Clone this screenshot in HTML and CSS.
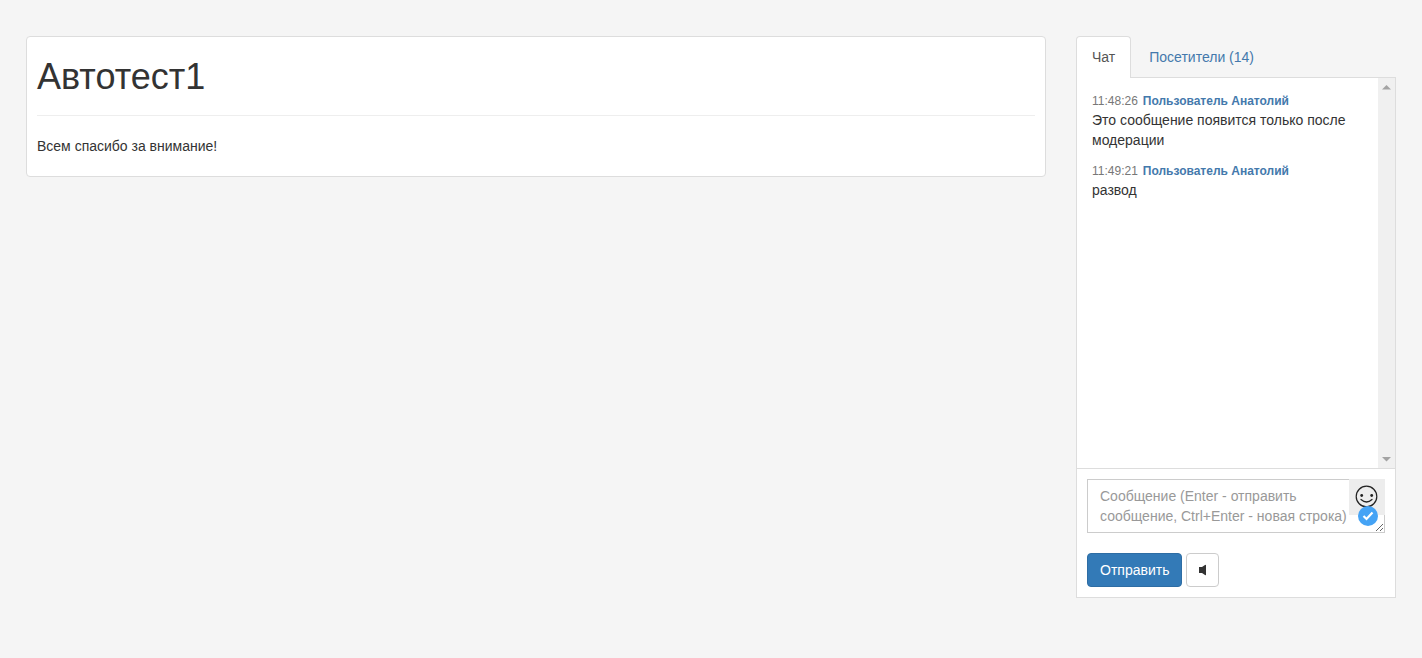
FILE: index.html
```html
<!DOCTYPE html>
<html lang="ru">
<head>
<meta charset="utf-8">
<meta name="viewport" content="width=device-width, initial-scale=1">
<title>Автотест1</title>
<link rel="stylesheet" href="styles.css">
</head>
<body>
<div class="page">
  <main class="card">
    <h1 class="card-title">Автотест1</h1>
    <p class="card-text">Всем спасибо за внимание!</p>
  </main>
  <aside class="chat">
    <nav class="tabs">
      <a class="tab tab-active" href="#chat">Чат</a>
      <a class="tab" href="#visitors">Посетители (14)</a>
    </nav>
    <section class="panel" id="chat">
      <div class="feed">
        <div class="messages">
          <article class="message">
            <header><time class="message-time">11:48:26</time><a class="message-author" href="#user">Пользователь Анатолий</a></header>
            <p class="message-text">Это сообщение появится только после модерации</p>
          </article>
          <article class="message">
            <header><time class="message-time">11:49:21</time><a class="message-author" href="#user">Пользователь Анатолий</a></header>
            <p class="message-text">развод</p>
          </article>
        </div>
        <div class="track" aria-hidden="true">
          <svg class="arrow" width="17" height="17" viewBox="0 0 17 17"><path d="M4 11.500L8.500 7L13 11.500Z" fill="#a3a3a3"/></svg>
          <svg class="arrow" width="17" height="17" viewBox="0 0 17 17"><path d="M4 6L8.500 10.500L13 6Z" fill="#a3a3a3"/></svg>
        </div>
      </div>
      <form class="composer">
        <div class="field">
          <textarea class="input" rows="2" aria-label="Сообщение" placeholder="Сообщение (Enter - отправить сообщение, Ctrl+Enter - новая строка)"></textarea>
          <button class="smile" type="button" aria-label="Смайлы">
            <svg width="36" height="36" viewBox="0 0 36 36" fill="none" stroke="#222" stroke-linecap="round"><circle cx="17.500" cy="17.500" r="10.300" stroke-width="1.200"/><path d="M12 20.500Q17.500 25.500 23 20.500" stroke-width="1.200"/><circle cx="12.700" cy="16.500" r="1.400" fill="#222" stroke="none"/><circle cx="22.700" cy="16.500" r="1.400" fill="#222" stroke="none"/></svg>
          </button>
          <svg class="check" width="20" height="20" viewBox="0 0 20 20"><circle cx="10" cy="10" r="10" fill="#45a3f5"/><path d="M5.500 10L8.500 13L14.500 6.500" fill="none" stroke="#fff" stroke-width="2.200"/></svg>
        </div>
        <div class="actions">
          <button class="btn btn-primary" type="submit">Отправить</button>
          <button class="btn btn-default" type="button" aria-label="Звук">
            <svg width="7" height="12" viewBox="0 0 7 12"><path d="M0 3H3L6 1Q7 .5 7 1.200V10.800Q7 11.500 6 11L3 9H0Z" fill="#333"/></svg>
          </button>
        </div>
      </form>
    </section>
  </aside>
</div>
</body>
</html>
```
FILE: styles.css
```css
* {
  box-sizing: border-box;
}

body {
  margin: 0;
  background: #f5f5f5;
  color: #333;
  font: 14px/20px "Liberation Sans", Arial, sans-serif;
}

a {
  color: #4479ac;
  text-decoration: none;
}

.page {
  display: grid;
  grid-template-columns: minmax(0, 1fr) 320px;
  gap: 30px;
  min-height: 100vh;
  padding: 36px 26px 60px;
}

.card {
  align-self: start;
  padding: 20px 10px;
  background: #fff;
  border: 1px solid #ddd;
  border-radius: 4px;
}

.card-title {
  margin: 0 0 20px;
  padding-bottom: 18px;
  border-bottom: 1px solid #eee;
  font-size: 36px;
  font-weight: 400;
  line-height: 40px;
}

.card-text,
.message-text {
  margin: 0;
}

.chat {
  display: flex;
  flex-direction: column;
}

.tabs {
  display: flex;
  gap: 2px;
}

.tab {
  padding: 10px 15px;
  border: 1px solid transparent;
  border-bottom: 0;
  border-radius: 4px 4px 0 0;
}

.tab-active {
  z-index: 1;
  margin-bottom: -1px;
  padding-bottom: 11px;
  background: #fff;
  border-color: #ddd;
  color: #555;
}

.panel {
  display: flex;
  flex: 1;
  flex-direction: column;
  background: #fff;
  border: 1px solid #ddd;
}

.feed {
  display: flex;
  flex: 1;
  border-bottom: 1px solid #ddd;
}

.messages {
  display: flex;
  flex: 1;
  flex-direction: column;
  gap: 10px;
  padding: 12px 15px;
}

.message-time,
.message-author {
  font-size: 12px;
  line-height: 16px;
}

.message-time {
  margin-right: 5px;
  color: #777;
}

.message-author {
  font-weight: 700;
}

.track {
  display: flex;
  flex-direction: column;
  justify-content: space-between;
  width: 17px;
  background: #f0f0f0;
}

.arrow {
  display: block;
}

.composer {
  display: flex;
  flex-direction: column;
  gap: 20px;
  padding: 10px;
}

.field {
  position: relative;
  display: flex;
}

.input {
  width: 100%;
  height: 54px;
  padding: 6px 12px;
  background: #fff;
  border: 1px solid #ccc;
  border-radius: 0;
  color: #555;
  font: inherit;
  resize: vertical;
  overflow: auto;
}

.input::placeholder {
  color: #999;
}

.smile {
  position: absolute;
  top: 0;
  right: 0;
  padding: 0;
  background: #ededed;
  border: 0;
}

.smile svg {
  display: block;
}

.check {
  position: absolute;
  top: 27px;
  right: 7px;
}

.actions {
  display: flex;
  gap: 4px;
}

.btn {
  display: flex;
  align-items: center;
  padding: 6px 12px;
  border: 1px solid;
  border-radius: 4px;
  font: inherit;
}

.btn-primary {
  background: #337ab7;
  border-color: #2e6da4;
  color: #fff;
}

.btn-default {
  background: #fff;
  border-color: #ccc;
}
```
